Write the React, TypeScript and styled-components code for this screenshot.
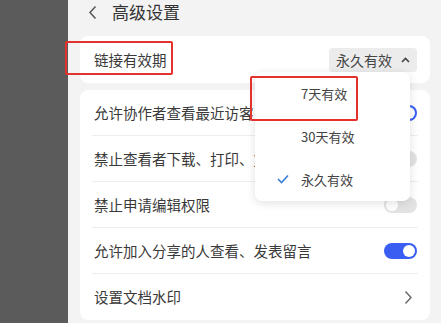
import React from "react";
import styled, { createGlobalStyle } from "styled-components";

const GlobalStyle = createGlobalStyle`
  html, body { margin: 0; padding: 0; }
  body {
    background: #f3f3f3;
    font-family: "Noto Sans CJK SC", "Noto Sans", sans-serif;
    color: #333;
  }
`;

const Page = styled.div`
  position: relative;
  display: flex;
  width: 441px;
  height: 323px;
  overflow: hidden;
`;

const SideStrip = styled.div`
  width: 68px;
  flex: none;
  background: #5b5b5b;
`;

const Panel = styled.div`
  flex: 1;
  background: #f3f3f3;
  padding: 0 11px 0 12px;
  display: flex;
  flex-direction: column;
`;

const Header = styled.div`
  height: 24px;
  display: flex;
  align-items: center;
  padding-left: 8px;
  gap: 15px;
`;

const Title = styled.span`
  font-size: 17px;
  line-height: 24px;
  color: #333;
`;

const Card = styled.div<{ $gap?: number }>`
  background: #fff;
  border-radius: 8px;
  margin-top: ${(p) => p.$gap ?? 0}px;
`;

const LinkRow = styled.div`
  height: 47px;
  display: flex;
  align-items: center;
  justify-content: space-between;
  padding: 0 13px 0 14px;
`;

const Label = styled.span`
  font-size: 14.5px;
  line-height: 20px;
  color: #3a3a3a;
  white-space: nowrap;
`;

const TriggerWrap = styled.div`
  position: relative;
`;

const Trigger = styled.div`
  display: flex;
  align-items: center;
  gap: 9px;
  height: 24px;
  padding: 0 7px 0 7px;
  background: #ececec;
  border-radius: 4px;
  font-size: 14px;
  color: #444;
`;

const Menu = styled.div`
  position: absolute;
  top: 24px;
  right: 7px;
  width: 155px;
  background: #fff;
  border-radius: 7px;
  box-shadow: 0 2px 10px rgba(0, 0, 0, 0.12);
  z-index: 2;
  display: flex;
  flex-direction: column;
`;

const MenuItem = styled.div`
  height: 43px;
  display: flex;
  align-items: center;
  padding-left: 46px;
  position: relative;
  font-size: 13px;
  color: #444;
`;

const Check = styled.svg`
  position: absolute;
  left: 22px;
  top: 16px;
`;

const List = styled.div`
  display: flex;
  flex-direction: column;
`;

const Row = styled.div<{ $last?: boolean }>`
  height: 46px;
  margin: 0 12px;
  padding: 0 1px 0 2px;
  display: flex;
  align-items: center;
  justify-content: space-between;
  border-bottom: ${(p) => (p.$last ? "none" : "1px solid #eeeeee")};
  box-sizing: border-box;
`;

const Toggle = styled.div<{ $on: boolean }>`
  width: 33px;
  height: 16px;
  border-radius: 8px;
  background: ${(p) => (p.$on ? "#3a5ef2" : "#e3e3e3")};
  position: relative;
  flex: none;
  &::after {
    content: "";
    position: absolute;
    top: 2px;
    left: ${(p) => (p.$on ? "19px" : "2px")};
    width: 12px;
    height: 12px;
    border-radius: 50%;
    background: #fff;
  }
`;

const Annotation = styled.div`
  position: absolute;
  border: 2px solid #e2322b;
  border-radius: 2px;
  box-sizing: border-box;
  z-index: 3;
`;

const BackIcon = () => (
  <svg width="9" height="15" viewBox="0 0 9 15">
    <path d="M7.5 1.5 L2 7.5 L7.5 13.5" fill="none" stroke="#555" strokeWidth="1.5" />
  </svg>
);

const CaretUp = () => (
  <svg width="9" height="6" viewBox="0 0 9 6">
    <path d="M1 5 L4.5 1.5 L8 5" fill="none" stroke="#444" strokeWidth="1.6" />
  </svg>
);

const ChevronRight = () => (
  <svg width="9" height="15" viewBox="0 0 9 15" style={{ marginRight: 4 }}>
    <path d="M1.5 1.5 L7 7.5 L1.5 13.5" fill="none" stroke="#666" strokeWidth="1.4" />
  </svg>
);

const rows: { label: string; kind: "on" | "off" | "link" }[] = [
  { label: "允许协作者查看最近访客", kind: "on" },
  { label: "禁止查看者下载、打印、复制", kind: "off" },
  { label: "禁止申请编辑权限", kind: "off" },
  { label: "允许加入分享的人查看、发表留言", kind: "on" },
  { label: "设置文档水印", kind: "link" },
];

export default function App() {
  return (
    <>
      <GlobalStyle />
      <Page>
        <SideStrip />
        <Panel>
          <Header>
            <BackIcon />
            <Title>高级设置</Title>
          </Header>
          <Card $gap={12}>
            <LinkRow>
              <Label>链接有效期</Label>
              <TriggerWrap>
                <Trigger>
                  永久有效
                  <CaretUp />
                </Trigger>
                <Menu>
                  <MenuItem>7天有效</MenuItem>
                  <MenuItem>30天有效</MenuItem>
                  <MenuItem>
                    <Check width="12" height="10" viewBox="0 0 12 10">
                      <path d="M1 5 L4.5 8.5 L11 1.5" fill="none" stroke="#3d7bd9" strokeWidth="1.6" />
                    </Check>
                    永久有效
                  </MenuItem>
                </Menu>
              </TriggerWrap>
            </LinkRow>
          </Card>
          <Card $gap={7}>
            <List>
              {rows.map((r, i) => (
                <Row key={r.label} $last={i === rows.length - 1}>
                  <Label>{r.label}</Label>
                  {r.kind === "link" ? <ChevronRight /> : <Toggle $on={r.kind === "on"} />}
                </Row>
              ))}
            </List>
          </Card>
        </Panel>
        <Annotation style={{ left: 65, top: 41, width: 108, height: 34 }} />
        <Annotation style={{ left: 250, top: 76, width: 108, height: 45 }} />
      </Page>
    </>
  );
}
